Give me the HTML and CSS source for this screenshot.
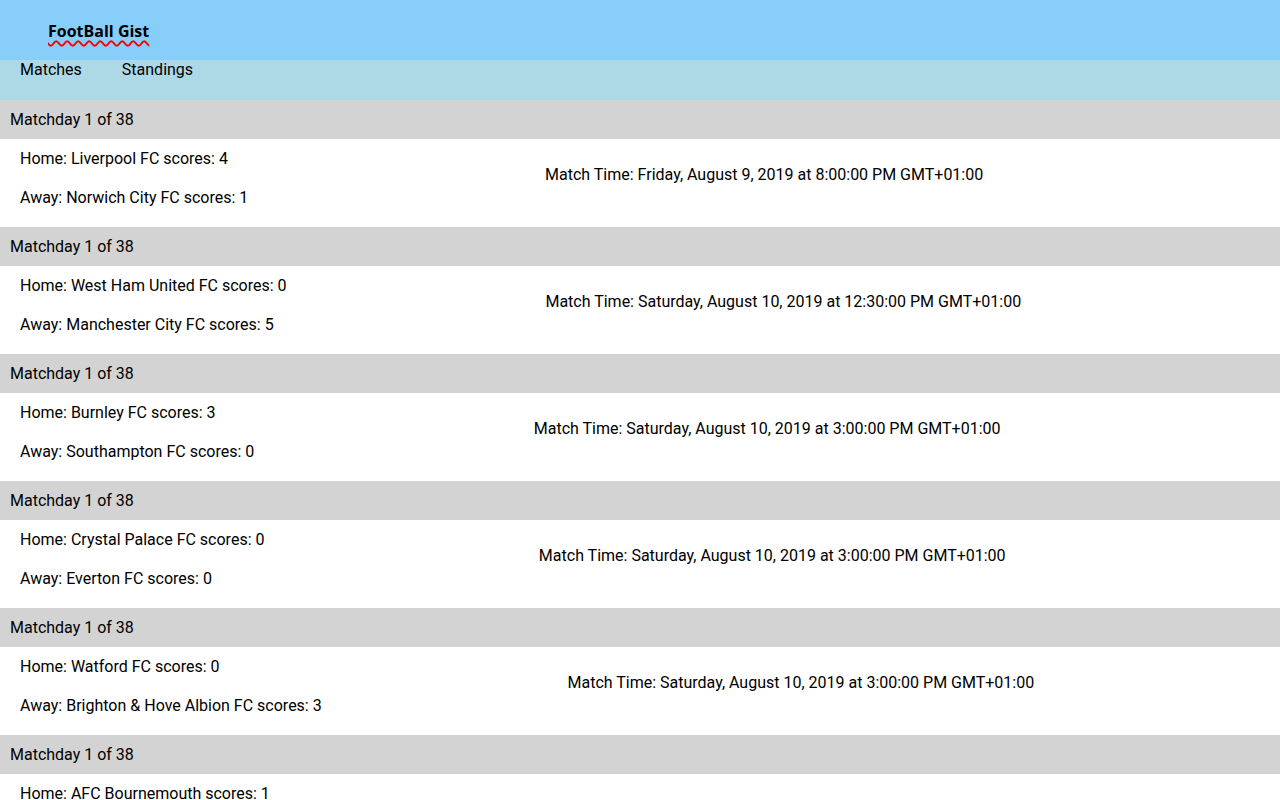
FILE: index.html
```html
<!DOCTYPE html>
<html>
<head>
<meta charset="utf-8">
<link rel="stylesheet" href="styles.css">
</head>
<body>
<header class="top">
  <span class="brand">FootBall Gist</span>
</header>
<nav class="nav">
  <a class="nav-link">Matches</a>
  <a class="nav-link">Standings</a>
</nav>
<main>
  <section class="match">
    <div class="matchday">Matchday 1 of 38</div>
    <div class="card">
      <div class="teams">
        <p>Home: Liverpool FC scores: 4</p>
        <p>Away: Norwich City FC scores: 1</p>
      </div>
      <div class="time"><p>Match Time: Friday, August 9, 2019 at 8:00:00 PM GMT+01:00</p></div>
    </div>
  </section>
  <section class="match">
    <div class="matchday">Matchday 1 of 38</div>
    <div class="card">
      <div class="teams">
        <p>Home: West Ham United FC scores: 0</p>
        <p>Away: Manchester City FC scores: 5</p>
      </div>
      <div class="time"><p>Match Time: Saturday, August 10, 2019 at 12:30:00 PM GMT+01:00</p></div>
    </div>
  </section>
  <section class="match">
    <div class="matchday">Matchday 1 of 38</div>
    <div class="card">
      <div class="teams">
        <p>Home: Burnley FC scores: 3</p>
        <p>Away: Southampton FC scores: 0</p>
      </div>
      <div class="time"><p>Match Time: Saturday, August 10, 2019 at 3:00:00 PM GMT+01:00</p></div>
    </div>
  </section>
  <section class="match">
    <div class="matchday">Matchday 1 of 38</div>
    <div class="card">
      <div class="teams">
        <p>Home: Crystal Palace FC scores: 0</p>
        <p>Away: Everton FC scores: 0</p>
      </div>
      <div class="time"><p>Match Time: Saturday, August 10, 2019 at 3:00:00 PM GMT+01:00</p></div>
    </div>
  </section>
  <section class="match">
    <div class="matchday">Matchday 1 of 38</div>
    <div class="card">
      <div class="teams">
        <p>Home: Watford FC scores: 0</p>
        <p>Away: Brighton &amp; Hove Albion FC scores: 3</p>
      </div>
      <div class="time"><p>Match Time: Saturday, August 10, 2019 at 3:00:00 PM GMT+01:00</p></div>
    </div>
  </section>
  <section class="match">
    <div class="matchday">Matchday 1 of 38</div>
    <div class="card">
      <div class="teams">
        <p>Home: AFC Bournemouth scores: 1</p>
        <p>Away: Sheffield United FC scores: 1</p>
      </div>
      <div class="time"><p>Match Time: Saturday, August 10, 2019 at 3:00:00 PM GMT+01:00</p></div>
    </div>
  </section>
</main>
</body>
</html>
```
FILE: styles.css
```css
html, body {
  margin: 0;
  padding: 0;
}
body {
  font-family: Roboto, "Liberation Sans", sans-serif;
  font-size: 16px;
  line-height: 19px;
  color: #000;
  background: #fff;
}
.top {
  height: 60px;
  background: #87cefa;
  display: flex;
  align-items: center;
  padding-left: 48px;
  box-sizing: border-box;
}
.brand {
  font-family: "Open Sans", sans-serif;
  font-weight: 700;
  font-size: 16px;
  line-height: 20px;
  text-decoration: underline wavy red;
  text-decoration-thickness: 2px;
  text-underline-offset: 3px;
  margin-top: 2px;
}
.nav {
  height: 40px;
  background: #add8e6;
  display: flex;
  align-items: flex-start;
  box-sizing: border-box;
}
.nav-link {
  padding: 0 20px;
  line-height: 19px;
}
.matchday {
  background: #d3d3d3;
  padding: 10px;
}
.card {
  display: flex;
  padding: 10px 0 0 20px;
}
.teams p {
  margin: 0 0 20px;
  white-space: nowrap;
}
.time {
  flex: 1;
  text-align: center;
}
.time p {
  margin: 16px 0 0;
}
```
